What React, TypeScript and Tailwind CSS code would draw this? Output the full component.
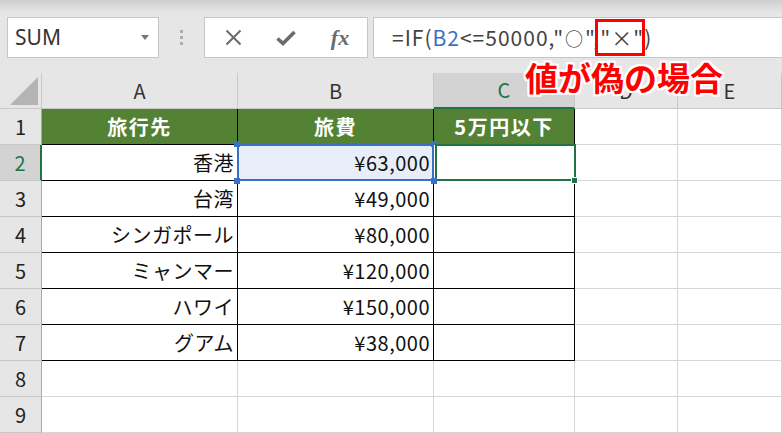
import React from "react";

const rows: [string, string][] = [
  ["香港", "¥63,000"],
  ["台湾", "¥49,000"],
  ["シンガポール", "¥80,000"],
  ["ミャンマー", "¥120,000"],
  ["ハワイ", "¥150,000"],
  ["グアム", "¥38,000"],
];

const colHead = "flex items-center justify-center bg-[#e6e6e6] border-r border-b border-[#c8c8c8] text-[20px] text-[#333]";
const rowHead = "flex items-center justify-center bg-[#e6e6e6] border-r border-b border-r-[#a9a9a9] border-b-[#c8c8c8] text-[20px] text-[#222]";
const plain = "bg-white border-r border-b border-[#d6d6d6]";
const tbl = "bg-white border-r border-b border-black flex items-center justify-end text-[20px] tracking-[0.5px] text-[#111]";
const green = "bg-[#548235] border-r border-b border-black flex items-center justify-center text-[20px] tracking-[1.5px] font-bold text-white";

export default function App() {
  return (
    <div className="relative w-[782px] h-[433px] overflow-hidden bg-[#e6e6e6] font-['Noto_Sans_CJK_JP',sans-serif]">
      {/* toolbar */}
      <div className="h-[73px] flex items-start pt-[17px] bg-[linear-gradient(#cfcfcf,#e6e6e6_13px)]">
        <div className="ml-[7px] w-[152px] h-[41px] bg-white border border-[#c6c6c6] flex items-center justify-between pl-[7px] pr-[9px]">
          <span className="font-['Noto_Sans',sans-serif] text-[21px] text-[#333] leading-none">SUM</span>
          <svg width="8" height="5" viewBox="0 0 8 5"><path d="M0 0h8L4 5z" fill="#777" /></svg>
        </div>
        <div className="w-[45px] h-[41px] flex flex-col items-center justify-center gap-[3px]">
          <div className="w-[3px] h-[3px] bg-[#adadad]" />
          <div className="w-[3px] h-[3px] bg-[#adadad]" />
          <div className="w-[3px] h-[3px] bg-[#adadad]" />
        </div>
        <div className="w-[164px] h-[41px] bg-white border border-[#c6c6c6] flex items-center">
          <div className="w-[54px] flex justify-center pl-[2px]">
            <svg width="17" height="17" viewBox="0 0 17 17"><path d="M1.5 1.5l14 14M15.5 1.5l-14 14" stroke="#6b6b6b" strokeWidth="2" /></svg>
          </div>
          <div className="w-[54px] flex justify-center">
            <svg width="20" height="16" viewBox="0 0 20 16"><path d="M1.5 8.5l5.5 5L18.5 2" stroke="#6b6b6b" strokeWidth="3.6" fill="none" /></svg>
          </div>
          <div className="w-[54px] flex justify-center">
            <span className="font-['Liberation_Serif',serif] italic font-bold text-[22px] text-[#6b6b6b] leading-none">fx</span>
          </div>
        </div>
        <div className="ml-[5px] flex-1 h-[41px] bg-white border border-[#c6c6c6] border-r-0 flex items-stretch pl-[18px]">
          <div className="flex items-center text-[21px] tracking-[1px] text-[#444] leading-none">
            <span>=IF(</span>
            <span className="text-[#3a6fc4]">B2</span>
            <span>&lt;=50000,"</span>
            <span className="text-[18px] px-[1px]">○</span>
            <span>",</span>
            <span className="relative self-stretch flex items-center">
              "×"
              <span className="absolute top-[1px] bottom-[1px] -left-[5px] -right-[1px] border-[3px] border-[#ff0000]" />
            </span>
            <span>)</span>
          </div>
        </div>
      </div>

      {/* sheet grid */}
      <div className="grid grid-cols-[42px_196px_196px_141px_103px_1fr] grid-rows-[repeat(10,36px)]">
        {/* header row */}
        <div className="relative bg-[#e6e6e6] border-r border-b border-[#c8c8c8]">
          <svg className="absolute right-[3px] bottom-[3px]" width="28" height="28" viewBox="0 0 28 28"><path d="M28 0V28H0z" fill="#b4b4b4" /></svg>
        </div>
        <div className={colHead}>A</div>
        <div className={colHead}>B</div>
        <div className="flex items-center justify-center bg-[#d3d3d3] border-r border-[#c8c8c8] border-b-2 border-b-[#217346] text-[20px] text-[#217346]">C</div>
        <div className={colHead}>D</div>
        <div className={colHead}>E</div>

        {/* row 1 */}
        <div className={rowHead}>1</div>
        <div className={green}>旅行先</div>
        <div className={green}>旅費</div>
        <div className={green}>5万円以下</div>
        <div className={plain} />
        <div className={plain} />

        {rows.map(([place, cost], i) => {
          const r = i + 2;
          const selected = r === 2;
          return (
            <React.Fragment key={r}>
              <div
                className={
                  selected
                    ? "flex items-center justify-center bg-[#d3d3d3] border-b border-b-[#c8c8c8] border-r-2 border-r-[#217346] text-[20px] text-[#217346]"
                    : rowHead
                }
              >
                {r}
              </div>
              <div className={tbl + " pr-[3px]"}>{place}</div>
              {selected ? (
                <div className="relative bg-[#e8eef9] border-r border-b border-black flex items-center justify-end text-[20px] tracking-[0.5px] text-[#111] pr-[3px]">
                  {cost}
                  <div className="absolute -top-[1px] -left-[1px] -right-[1px] -bottom-[1px] border-2 border-[#3a70c8]" />
                  <div className="absolute -top-[4px] -left-[4px] w-[6px] h-[6px] bg-[#3a70c8]" />
                  <div className="absolute -top-[4px] -right-[4px] w-[6px] h-[6px] bg-[#3a70c8]" />
                  <div className="absolute -bottom-[4px] -left-[4px] w-[6px] h-[6px] bg-[#3a70c8]" />
                  <div className="absolute -bottom-[4px] -right-[4px] w-[6px] h-[6px] bg-[#3a70c8] z-10" />
                </div>
              ) : (
                <div className={tbl + " pr-[3px]"}>{cost}</div>
              )}
              {selected ? (
                <div className="relative bg-white border-r border-b border-black">
                  <div className="absolute -top-[1px] left-[1px] -right-[2px] -bottom-[1px] border-2 border-[#217346]" />
                  <div className="absolute -bottom-[4px] -right-[4px] w-[7px] h-[7px] bg-[#217346] border border-white z-10" />
                </div>
              ) : (
                <div className="bg-white border-r border-b border-black" />
              )}
              <div className={plain} />
              <div className={plain} />
            </React.Fragment>
          );
        })}

        {[8, 9].map((r) => (
          <React.Fragment key={r}>
            <div className={rowHead}>{r}</div>
            <div className={plain} />
            <div className={plain} />
            <div className={plain} />
            <div className={plain} />
            <div className={plain} />
          </React.Fragment>
        ))}
      </div>

      {/* annotation */}
      <div className="absolute left-[525px] top-[61px] text-[33px] font-bold leading-none text-[#ff0000] [text-shadow:2px_0_0_#fff,-2px_0_0_#fff,0_2px_0_#fff,0_-2px_0_#fff,2px_2px_0_#fff,-2px_-2px_0_#fff,2px_-2px_0_#fff,-2px_2px_0_#fff]">
        値が偽の場合
      </div>
    </div>
  );
}
